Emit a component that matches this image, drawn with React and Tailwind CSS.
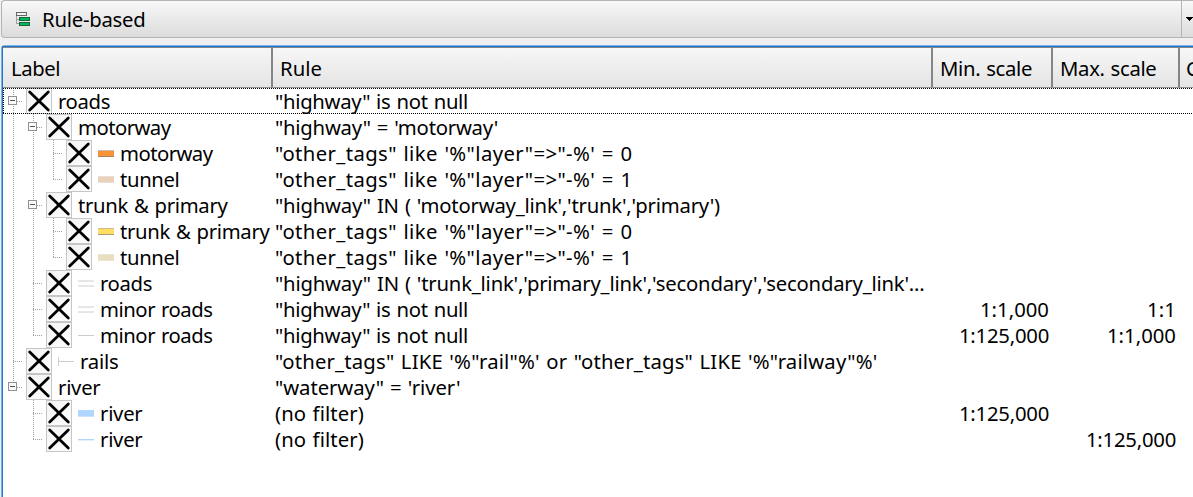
import { useLayoutEffect, useRef } from 'react';

// Text whose letter spacing is adjusted so that it takes up `w` pixels.
// Gaps between words get a little extra room.
function Fit({ w, children }) {
  const ref = useRef(null);
  useLayoutEffect(() => {
    const el = ref.current;
    el.style.letterSpacing = '0px';
    const natural = el.getBoundingClientRect().width;
    el.style.letterSpacing = `${(w - natural) / children.length}px`;
  }, [w, children]);
  return <span ref={ref} className="whitespace-pre [word-spacing:1px]">{children}</span>;
}

const ROWS = [
  { guides: ['T+'], label: 'roads', lw: 52, rule: '"highway" is not null', rw: 193 },
  { guides: ['v', 'T+'], label: 'motorway', lw: 92.5, rule: '"highway" = \'motorway\'', rw: 223 },
  { guides: ['v', 'v', 'T'], icon: 'orange', label: 'motorway', lw: 92.5, rule: '"other_tags" like \'%"layer"=>"-%\' = 0', rw: 357.5 },
  { guides: ['v', 'v', 'L'], icon: 'pink', label: 'tunnel', lw: 59.5, rule: '"other_tags" like \'%"layer"=>"-%\' = 1', rw: 357.5 },
  { guides: ['v', 'T+'], label: 'trunk & primary', lw: 149.5, rule: '"highway" IN ( \'motorway_link\',\'trunk\',\'primary\')', rw: 445 },
  { guides: ['v', 'v', 'T'], icon: 'yellow', label: 'trunk & primary', lw: 149.5, rule: '"other_tags" like \'%"layer"=>"-%\' = 0', rw: 357.5 },
  { guides: ['v', 'v', 'L'], icon: 'beige', label: 'tunnel', lw: 59.5, rule: '"other_tags" like \'%"layer"=>"-%\' = 1', rw: 357.5 },
  { guides: ['v', 'T'], icon: 'double', label: 'roads', lw: 52, rule: '"highway" IN ( \'trunk_link\',\'primary_link\',\'secondary\',\'secondary_link\'...', rw: 649.5 },
  { guides: ['v', 'T'], icon: 'double', label: 'minor roads', lw: 112.5, rule: '"highway" is not null', rw: 193, min: '1:1,000', minW: 69, max: '1:1', maxW: 29 },
  { guides: ['v', 'L'], icon: 'single', label: 'minor roads', lw: 112.5, rule: '"highway" is not null', rw: 193, min: '1:125,000', minW: 90, max: '1:1,000', maxW: 69 },
  { guides: ['T'], icon: 'rail', label: 'rails', lw: 38.5, rule: '"other_tags" LIKE \'%"rail"%\' or "other_tags" LIKE \'%"railway"%\'', rw: 602.5 },
  { guides: ['L+'], label: 'river', lw: 42.5, rule: '"waterway" = \'river\'', rw: 185.5 },
  { guides: ['', 'T'], icon: 'blue', label: 'river', lw: 42.5, rule: '(no filter)', rw: 89, min: '1:125,000', minW: 90 },
  { guides: ['', 'L'], icon: 'thinblue', label: 'river', lw: 42.5, rule: '(no filter)', rw: 89, max: '1:125,000', maxW: 90 },
];

function Guide({ kind }) {
  const through = kind === 'v' || kind[0] === 'T';
  const box = kind.endsWith('+');
  const line = { stroke: '#a0a0a0', strokeWidth: 1, strokeDasharray: '1 1' };
  return (
    <svg width="20" height="26" className="block shrink-0" shapeRendering="crispEdges">
      {kind && <path d={through ? 'M7.5 0V26' : 'M7.5 0V14'} {...line} />}
      {kind && kind !== 'v' && <path d="M7 13.5H16" {...line} />}
      {box && (
        <>
          <rect x="2.5" y="8.5" width="8" height="8" rx="1" fill="#fafafa" stroke="#919191" />
          <path d="M4 12.5H9" stroke="#555" />
        </>
      )}
    </svg>
  );
}

function Check() {
  return (
    <svg width="26" height="26" className="block shrink-0">
      <defs>
        <linearGradient id="face" x1="0" y1="0" x2="1" y2="1">
          <stop offset="0" stopColor="#f3f3f3" />
          <stop offset="1" stopColor="#fefefe" />
        </linearGradient>
      </defs>
      <rect x="0.5" y="0.5" width="25" height="25" fill="url(#face)" stroke="#c6c6c6" />
      <path d="M3.7 4L22.3 22M22.3 4L3.7 22" stroke="#000" strokeWidth="2.8" strokeLinecap="round" />
    </svg>
  );
}

function Symbol({ kind }) {
  const bars = {
    orange: ['#fa9237', '#c9b9ae', '#a98262'],
    yellow: ['#ffdc62', '#c9bd88', '#a99f70'],
    pink: ['#ebd0ba', '#eadfd6', '#eadfd6'],
    beige: ['#e9dfc0', '#ebe5d2', '#ebe5d2'],
    blue: ['#b0d5ff', '#b0d5ff', '#c8e2ff'],
  };
  const bar = bars[kind];
  return (
    <svg width="16" height="26" className="block shrink-0" shapeRendering="crispEdges">
      {bar && (
        <>
          <path d="M0 10.5H16" stroke={bar[1]} />
          <rect x="0" y="11" width="16" height="5" fill={bar[0]} />
          <path d="M0 16.5H16" stroke={bar[2]} />
        </>
      )}
      {kind === 'double' && <path d="M0 11H16M0 16H16" stroke="#e6e6e6" strokeWidth="2" />}
      {kind === 'single' && <path d="M0 13.5H16" stroke="#cccccc" />}
      {kind === 'rail' && <path d="M0.5 9V18M0 13.5H16" stroke="#cdcdcd" />}
      {kind === 'thinblue' && (
        <>
          <path d="M0 13.5H16" stroke="#b0d5ff" />
          <path d="M0 14.5H16" stroke="#e2f0ff" />
        </>
      )}
    </svg>
  );
}

function TreeRow({ row, focused }) {
  return (
    <div className="relative flex h-[26px] leading-[26px]">
      <div className="flex w-[272px] shrink-0 pl-[3px]">
        {row.guides.map((g, i) => <Guide key={i} kind={g} />)}
        <Check />
        {row.icon && <div className="pl-1.5"><Symbol kind={row.icon} /></div>}
        <div className="pl-1.5"><Fit w={row.lw}>{row.label}</Fit></div>
      </div>
      <div className="w-[660px] shrink-0"><Fit w={row.rw}>{row.rule}</Fit></div>
      <div className="w-[114px] shrink-0 text-right">{row.min && <Fit w={row.minW}>{row.min}</Fit>}</div>
      <div className="w-[127px] shrink-0 text-right">{row.max && <Fit w={row.maxW}>{row.max}</Fit>}</div>
      {focused && (
        <svg width="1190" height="26" className="absolute left-0 top-0" shapeRendering="crispEdges">
          <path d="M0 0.5H1190M0 25.5H1190M0.5 0V26" fill="none" stroke="#000" strokeDasharray="1 1" />
        </svg>
      )}
    </div>
  );
}

function HeaderCell({ className, w, last, children }) {
  return (
    <div className={`flex h-[39px] shrink-0 items-center pt-px ${last ? '' : 'border-r-2 border-[#858585]'} ${className}`}>
      <Fit w={w}>{children}</Fit>
    </div>
  );
}

export default function App() {
  return (
    <div className="h-[497px] w-[1193px] overflow-hidden bg-[#f0f0f0] font-['Noto_Sans','Noto_Sans_CJK_SC',sans-serif] text-[20.3px] text-black">
      <div className="pl-px">
        <div className="flex h-[38px] rounded-l-sm border border-r-0 border-[#b4b4b4] bg-linear-to-b from-[#f8f8f8] to-[#dcdcdc]">
          <div className="flex flex-1 items-center">
            <svg width="16" height="16" className="ml-[14px] mr-[10px] block shrink-0" shapeRendering="crispEdges">
              <path d="M0.5 5V13M0 8.5H3M0 12.5H3" stroke="#a0a0a0" fill="none" />
              <rect x="0.5" y="1.5" width="10" height="3" fill="#f4f4f4" stroke="#666" />
              <rect x="3.5" y="6.5" width="10" height="3" fill="#00b857" stroke="#17633c" />
              <rect x="3.5" y="11.5" width="10" height="3" fill="#00b857" stroke="#17633c" />
            </svg>
            <Fit w={103.5}>Rule-based</Fit>
          </div>
          <div className="flex w-3 items-center border-l border-[#b4b4b4] pl-1">
            <svg width="7" height="4" className="block shrink-0" shapeRendering="crispEdges">
              <path d="M0 0H7V1H6V2H5V3H4V4H3V3H2V2H1V1H0Z" />
            </svg>
          </div>
        </div>
      </div>
      <div className="pl-px pt-[7px]">
        <div className="h-[460px] rounded-tl-sm border-l border-t border-[#7ab0e8]">
          <div className="h-full border-l border-t border-[#1d78d2] bg-white">
            <div className="flex h-[41px] border-y border-b-[#909090] border-t-[#858585] bg-linear-to-b from-[#f7f7f7] to-[#e4e4e4]">
              <HeaderCell className="w-[270px] pl-2" w={49}>Label</HeaderCell>
              <HeaderCell className="w-[660px] pl-[7px]" w={42}>Rule</HeaderCell>
              <HeaderCell className="w-[120px] pl-[7px]" w={92}>Min. scale</HeaderCell>
              <HeaderCell className="w-[127px] pl-[7px]" w={96.5}>Max. scale</HeaderCell>
              <HeaderCell className="w-8 pl-[6px]" w={13} last>C</HeaderCell>
            </div>
            {ROWS.map((row, i) => <TreeRow key={i} row={row} focused={i === 0} />)}
          </div>
        </div>
      </div>
    </div>
  );
}
